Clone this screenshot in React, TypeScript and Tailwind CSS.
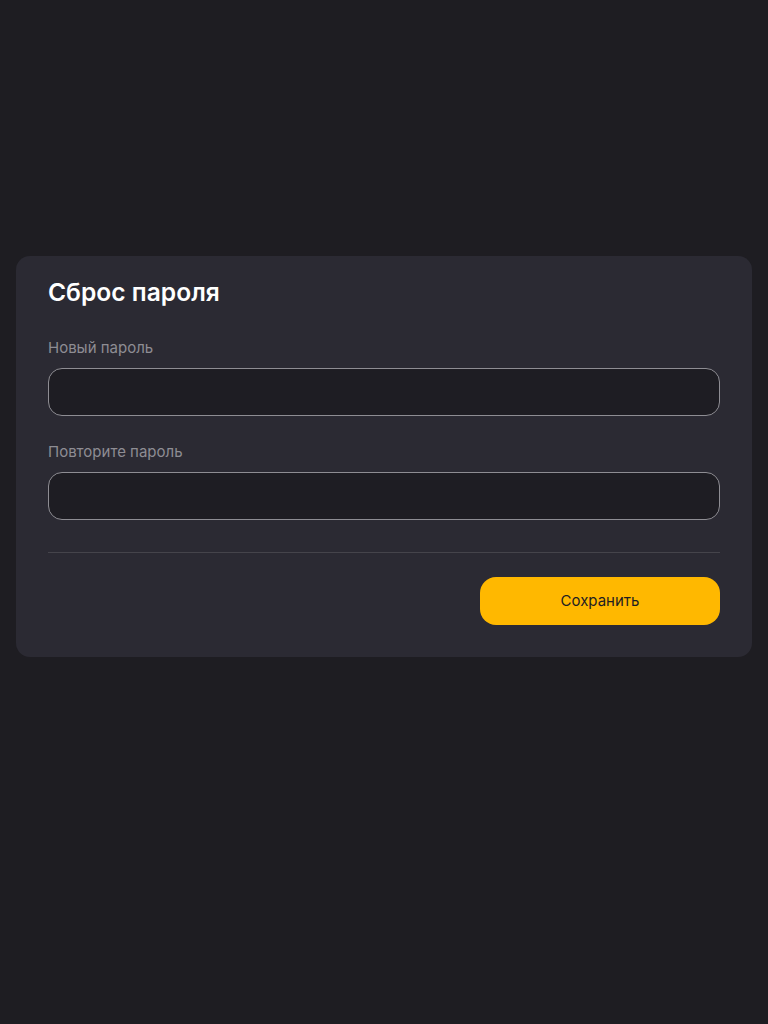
import React from "react";

export default function App() {
  return (
    <div
      className="min-h-[1024px] w-full bg-[#1e1d22] flex flex-col items-stretch px-4 pt-[256px]"
      style={{ fontFamily: "Inter, 'Noto Sans', sans-serif" }}
    >
      <div className="bg-[#2b2a33] rounded-[14px] px-8 pt-6 pb-8 flex flex-col">
        <h1 className="text-[24.6px] leading-[24px] font-semibold text-white">
          Сброс пароля
        </h1>
        <div className="mt-[34px] flex flex-col">
          <label className="text-[15px] leading-[20px] text-[#8e8d93]">Новый пароль</label>
          <input
            type="password"
            className="mt-[10px] h-[48px] rounded-[14px] border border-[#8e8d93] bg-[#1e1d23] px-4 text-white outline-none"
          />
        </div>
        <div className="mt-[26px] flex flex-col">
          <label className="text-[15px] leading-[20px] text-[#8e8d93]">Повторите пароль</label>
          <input
            type="password"
            className="mt-[10px] h-[48px] rounded-[14px] border border-[#8e8d93] bg-[#1e1d23] px-4 text-white outline-none"
          />
        </div>
        <div className="mt-8 h-px bg-[#45444b]" />
        <div className="mt-6 flex justify-end">
          <button className="h-[48px] w-[240px] rounded-[16px] bg-[#ffb800] text-[15px] text-[#1e1d22]">
            Сохранить
          </button>
        </div>
      </div>
    </div>
  );
}
